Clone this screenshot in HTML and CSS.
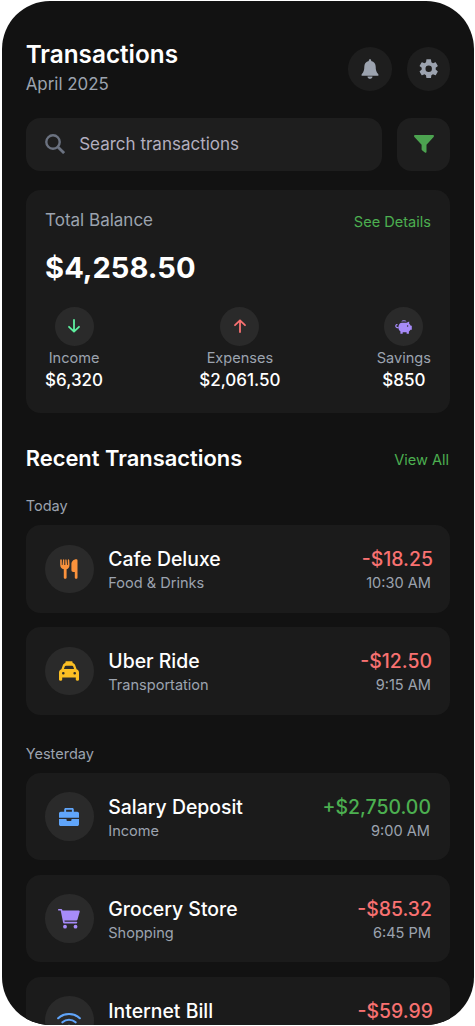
FILE: index.html
```
<!DOCTYPE html>
<html lang="en">
<head>
<meta charset="utf-8">
<title>Transactions</title>
<link rel="stylesheet" href="styles.css">
</head>
<body>
<main class="phone">
  <header class="header">
    <div>
      <h1 class="title">Transactions</h1>
      <p class="month">April 2025</p>
    </div>
    <div class="actions">
      <button class="round" aria-label="Notifications"><svg width="20" height="22" viewBox="0 0 20 22" fill="#9ca3af"><path d="M10 1.200c.8 0 1.200.5 1.200 1.200v.5c2.900.6 4.500 2.900 4.500 5.900 0 3.300.6 5.200 2.400 7.100.8.900.5 1.800-.6 1.800H2.500c-1.100 0-1.400-.9-.6-1.800 1.800-1.900 2.400-3.800 2.400-7.100 0-3 1.600-5.300 4.500-5.900v-.5c0-.7.4-1.200 1.200-1.200zM7.500 18.600h5c0 1.300-1.100 2.300-2.500 2.300s-2.500-1-2.500-2.300z"/></svg></button>
      <button class="round" aria-label="Settings"><svg width="23.400" height="23.400" viewBox="0 0 24 24" fill="#9ca3af"><path d="M19.140 12.940c.04-.3.060-.61.060-.94 0-.32-.02-.64-.07-.94l2.030-1.580a.49.49 0 0 0 .12-.61l-1.920-3.320a.488.488 0 0 0-.59-.22l-2.390.96c-.5-.38-1.030-.7-1.620-.94l-.36-2.540a.484.484 0 0 0-.48-.41h-3.840c-.24 0-.43.17-.47.41l-.36 2.540c-.59.24-1.130.57-1.620.94l-2.390-.96a.48.48 0 0 0-.59.22L2.740 8.870c-.12.21-.08.47.12.61l2.030 1.580c-.05.3-.09.63-.09.94s.02.64.07.94l-2.030 1.580a.49.49 0 0 0-.12.61l1.920 3.320c.12.22.37.29.59.22l2.390-.96c.5.38 1.030.7 1.620.94l.36 2.540c.05.24.24.41.48.41h3.840c.24 0 .44-.17.47-.41l.36-2.540c.59-.24 1.130-.56 1.620-.94l2.390.96c.22.080.47 0 .59-.22l1.920-3.320a.48.48 0 0 0-.12-.61zM12 15.300a3.300 3.300 0 1 1 0-6.600 3.300 3.300 0 0 1 0 6.600z"/></svg></button>
    </div>
  </header>

  <div class="search-row">
    <div class="search">
      <svg width="20" height="20" viewBox="0 0 20 20" fill="none" stroke="#6b7280" stroke-width="2.400"><circle cx="8" cy="8" r="6.700"/><path d="M12.900 12.900l6.200 6.200" stroke-width="2.800"/></svg>
      <span>Search transactions</span>
    </div>
    <button class="filter" aria-label="Filter"><svg width="20" height="18" viewBox="0 0 20 18" fill="#4ca350"><path d="M1.100 0h17.800c1 0 1.400 1.100.7 1.900L12.500 9.800v6.900c0 .9-.8 1.300-1.600.8l-2.600-1.900c-.5-.4-.7-.8-.7-1.400V9.800L.4 1.900C-.3 1.100.1 0 1.100 0z"/></svg></button>
  </div>

  <section class="balance">
    <div class="balance-head"><span class="balance-label">Total Balance</span><a class="link">See Details</a></div>
    <div class="balance-total">$4,258.50</div>
    <div class="stats">
      <div class="stat">
        <span class="dot"><svg width="14" height="14" viewBox="0 0 14 14" fill="none" stroke="#5ef0a0" stroke-width="1.800" stroke-linecap="round" stroke-linejoin="round"><path d="M7 1v11.600M2 7.800l5 4.900 5-4.900"/></svg></span>
        <span class="stat-name">Income</span><span class="stat-value">$6,320</span>
      </div>
      <div class="stat">
        <span class="dot"><svg width="14" height="14" viewBox="0 0 14 14" fill="none" stroke="#f87171" stroke-width="1.800" stroke-linecap="round" stroke-linejoin="round"><path d="M7 13V1.400M2 6.200l5-4.900 5 4.900"/></svg></span>
        <span class="stat-name">Expenses</span><span class="stat-value">$2,061.50</span>
      </div>
      <div class="stat">
        <span class="dot"><svg width="17" height="15" viewBox="0 0 17 15"><g fill="#a78bfa"><path d="M6.200 2.500a3 2.400 0 0 1 5.400 0q-2.700-.6-5.400 0z"/><path d="M7 3.700h4.500l2.700-1.300v2.400c.8.600 1.200 1.200 1.500 2h1.100v4h-1.300c-.5.8-1 1.200-1.600 1.600v2.400h-2.300v-1.600H7.700v1.600H5.400v-2.500C3.800 11.300 3.200 9.700 3.400 7.800 3.700 5.300 5 3.700 7 3.700z"/></g><path d="M3.500 8.600C1.600 8.700.8 8 .8 6.900s1-1.600 1.700-1.100" fill="none" stroke="#a78bfa" stroke-width="1.200"/><circle cx="12.600" cy="7" r=".7" fill="#2a2a2a"/></svg></span>
        <span class="stat-name">Savings</span><span class="stat-value">$850</span>
      </div>
    </div>
  </section>

  <div class="recent-head"><h2 class="recent-title">Recent Transactions</h2><a class="link">View All</a></div>

  <h3 class="day">Today</h3>
  <div class="list">
    <article class="item">
      <span class="icon"><svg width="18" height="20" viewBox="0 0 18 20" fill="#fb923c"><path d="M1 .2c.5 0 .8.4.8.9v4.800h.7l.5-4.900c.1-1 1.200-1 1.300 0v4.900h1V1c.1-1 1.200-1 1.300 0l.5 4.900h.7V1.100c0-1.100 1.200-1.100 1.400-.1l.3 4.800c0 2.400-1.100 3.900-2.900 4.500v8.100c0 .9-.6 1.400-1.400 1.400s-1.400-.5-1.400-1.400v-8.100C1.500 9.700.2 8.200.2 5.800V1C.3.500.6.200 1 .2zM16.300.2c.8 0 1.200.5 1.200 1.200v17c0 .9-.5 1.400-1.300 1.400s-1.400-.5-1.400-1.400V13h-1.500c-1.200 0-1.900-.8-1.900-2V5.400c0-3 2.100-5.200 4.900-5.200z"/></svg></span>
      <div class="info"><span class="name">Cafe Deluxe</span><span class="sub">Food &amp; Drinks</span></div>
      <div class="amounts"><span class="amount minus out">-$18.25</span><span class="sub">10:30 AM</span></div>
    </article>
    <article class="item">
      <span class="icon"><svg width="20" height="20" viewBox="0 0 20 20" fill="#fbbf24" fill-rule="evenodd"><path d="M7.400.2h5.200c.6 0 1 .4 1 1v.7c1.200.2 2 .9 2.500 2.100l1.500 4.200c1.500.5 2.400 1.700 2.400 3.200v7.200c0 .8-.5 1.200-1.200 1.200H18c-.7 0-1.200-.5-1.200-1.200v-2H3.200v2c0 .8-.5 1.200-1.200 1.200h-.8c-.7 0-1.200-.4-1.200-1.200v-7.200c0-1.500.9-2.700 2.400-3.200L3.900 4c.5-1.200 1.300-1.900 2.500-2.100v-.7c0-.6.4-1 1-1zM6.900 4.700c-.6 0-.9.200-1.100.7L4.900 8h10.200l-.9-2.600c-.2-.5-.5-.7-1.100-.7zM4.300 11a1.300 1.300 0 1 0 0 2.600 1.300 1.300 0 0 0 0-2.600zm11.400 0a1.300 1.300 0 1 0 0 2.600 1.300 1.300 0 0 0 0-2.600z"/></svg></span>
      <div class="info"><span class="name">Uber Ride</span><span class="sub">Transportation</span></div>
      <div class="amounts"><span class="amount minus slight">-$12.50</span><span class="sub">9:15 AM</span></div>
    </article>
  </div>

  <h3 class="day">Yesterday</h3>
  <div class="list">
    <article class="item">
      <span class="icon"><svg width="20" height="18" viewBox="0 0 20 18" fill="#60a5fa" fill-rule="evenodd"><path d="M6.800 0h6.400c1 0 1.600.7 1.600 1.600v2.100h3.400c1 0 1.800.8 1.800 1.800v4.300H0V5.500c0-1 .8-1.800 1.800-1.800h3.400V1.600C5.200.7 5.800 0 6.800 0zm.3 1.800v1.900h5.800V1.800zM0 11h7.500v1c0 .6.400.9.9.9h3.200c.5 0 .9-.3.9-.9v-1H20v5.200c0 1-.8 1.800-1.800 1.800H1.800c-1 0-1.800-.8-1.800-1.800z"/></svg></span>
      <div class="info"><span class="name">Salary Deposit</span><span class="sub">Income</span></div>
      <div class="amounts"><span class="amount plus">+$2,750.00</span><span class="sub in">9:00 AM</span></div>
    </article>
    <article class="item">
      <span class="icon"><svg width="22" height="20" viewBox="0 0 22 20" fill="#a78bfa"><path d="M.8 0h2.500c.5 0 .8.2.9.700L4.400 1.500h16.400c.7 0 1.100.5.900 1.200l-2.200 7.800c-.2.6-.6.9-1.200.9H6.400l.3 1.400h11.800c1 0 1 1.600 0 1.600H6.100c-.6 0-.9-.2-1-.8L2.700 1.600H.8C-.3 1.600-.3 0 .8 0z"/><circle cx="7" cy="17.700" r="1.900"/><circle cx="17.500" cy="17.700" r="1.900"/></svg></span>
      <div class="info"><span class="name">Grocery Store</span><span class="sub">Shopping</span></div>
      <div class="amounts"><span class="amount minus slight">-$85.32</span><span class="sub">6:45 PM</span></div>
    </article>
    <article class="item clipped">
      <span class="icon"><svg width="24" height="18" viewBox="0 0 24 18" fill="none" stroke="#60a5fa" stroke-width="2.200" stroke-linecap="round"><path d="M1.200 6.200c6-5.600 15.600-5.600 21.600 0M5.400 10.300c3.800-3.400 9.400-3.400 13.200 0"/><circle cx="12" cy="15" r="2.300" fill="#60a5fa" stroke="none"/></svg></span>
      <div class="info"><span class="name">Internet Bill</span></div>
      <div class="amounts"><span class="amount minus out">-$59.99</span></div>
    </article>
  </div>
</main>
</body>
</html>
```

FILE: styles.css
```
* { box-sizing: border-box; }
body {
  margin: 0;
  padding: 1px 1px 1px 1.500px;
  height: 1026px;
  overflow: hidden;
  background: #fff;
  font-family: Inter, "Liberation Sans", sans-serif;
  color: #fff;
}
h1, h2, h3, p { margin: 0; }
button { border: 0; padding: 0; }
svg { display: block; flex: none; }
.phone {
  height: 1024px;
  overflow: hidden;
  background: #121212;
  border-radius: 48px;
  padding: 38px 23.700px 0 24.200px;
}
.header { display: flex; justify-content: space-between; height: 78.500px; }
.title { font-size: 24.300px; line-height: 31px; font-weight: 600; }
.month { font-size: 16.900px; line-height: 24px; margin-top: 2px; color: #9ca3af; }
.actions { display: flex; gap: 14.500px; padding-top: 8px; }
.round {
  width: 43.700px; height: 43.700px; border-radius: 50%;
  background: #1e1e1e;
  display: flex; align-items: center; justify-content: center;
}
.search-row { display: flex; gap: 14.500px; height: 53.500px; }
.search {
  flex: 1; display: flex; align-items: center; gap: 14.500px;
  padding-left: 19px; border-radius: 14.500px;
  background: #1e1e1e; color: #b3aebf; font-size: 17px;
}
.filter {
  width: 53.500px; border-radius: 14.500px; background: #1e1e1e;
  display: flex; align-items: center; justify-content: center;
}
.balance {
  margin-top: 19.200px; height: 223.300px; padding: 18px 19.400px 0;
  border-radius: 14.500px; background: #1b1b1b;
}
.balance-head { display: flex; justify-content: space-between; align-items: flex-start; height: 41.700px; }
.balance-label { font-size: 17px; line-height: 24px; color: #9ca3af; }
.link { font-size: 14.560px; line-height: 20px; color: #4caf50; }
.balance-head .link { padding-top: 4px; }
.balance-total { font-size: 29.100px; line-height: 36px; font-weight: 700; }
.stats { display: flex; justify-content: space-between; margin-top: 21.100px; }
.stat { display: flex; flex-direction: column; align-items: center; }
.dot {
  width: 39px; height: 39px; border-radius: 50%; background: #2a2a2a;
  display: flex; align-items: center; justify-content: center;
}
.stat-name { font-size: 14.560px; line-height: 20px; margin-top: 2px; color: #9ca3af; }
.stat-value { font-size: 17px; line-height: 24px; font-weight: 500; }
.recent-head { display: flex; justify-content: space-between; align-items: center; margin-top: 30.500px; height: 29px; padding-right: 1.300px; }
.recent-head .link { padding-top: 3px; }
.recent-title { font-size: 21.900px; line-height: 29px; font-weight: 600; }
.day { font-size: 14.560px; line-height: 20px; font-weight: 400; color: #9ca3af; margin: 23px 0 9.300px; }
.list { display: flex; flex-direction: column; gap: 14.500px; }
.list + .day { margin: 29px 0 9px; }
.item {
  display: flex; align-items: center; flex: none; height: 87.500px;
  padding: 0 19.400px; border-radius: 14.500px; background: #1b1b1b;
}
.icon {
  width: 48.500px; height: 48.500px; border-radius: 50%; background: #2a2a2a;
  display: flex; align-items: center; justify-content: center; flex: none;
}
.info { display: flex; flex-direction: column; flex: 1; margin-left: 14.700px; padding-top: 1.200px; }
.amounts { display: flex; flex-direction: column; align-items: flex-end; padding-top: 1.200px; }
.clipped .info, .clipped .amounts { padding-bottom: 21px; }
.name, .amount { font-size: 19.410px; line-height: 28px; font-weight: 500; }
.amount { font-weight: 450; }
.sub { font-size: 14.560px; line-height: 21px; color: #9ca3af; }
.minus { color: #f87171; }
.plus { color: #4caf50; }
.out { margin-right: -2px; }
.slight { margin-right: -1px; }
.in { margin-right: 1px; }
```
